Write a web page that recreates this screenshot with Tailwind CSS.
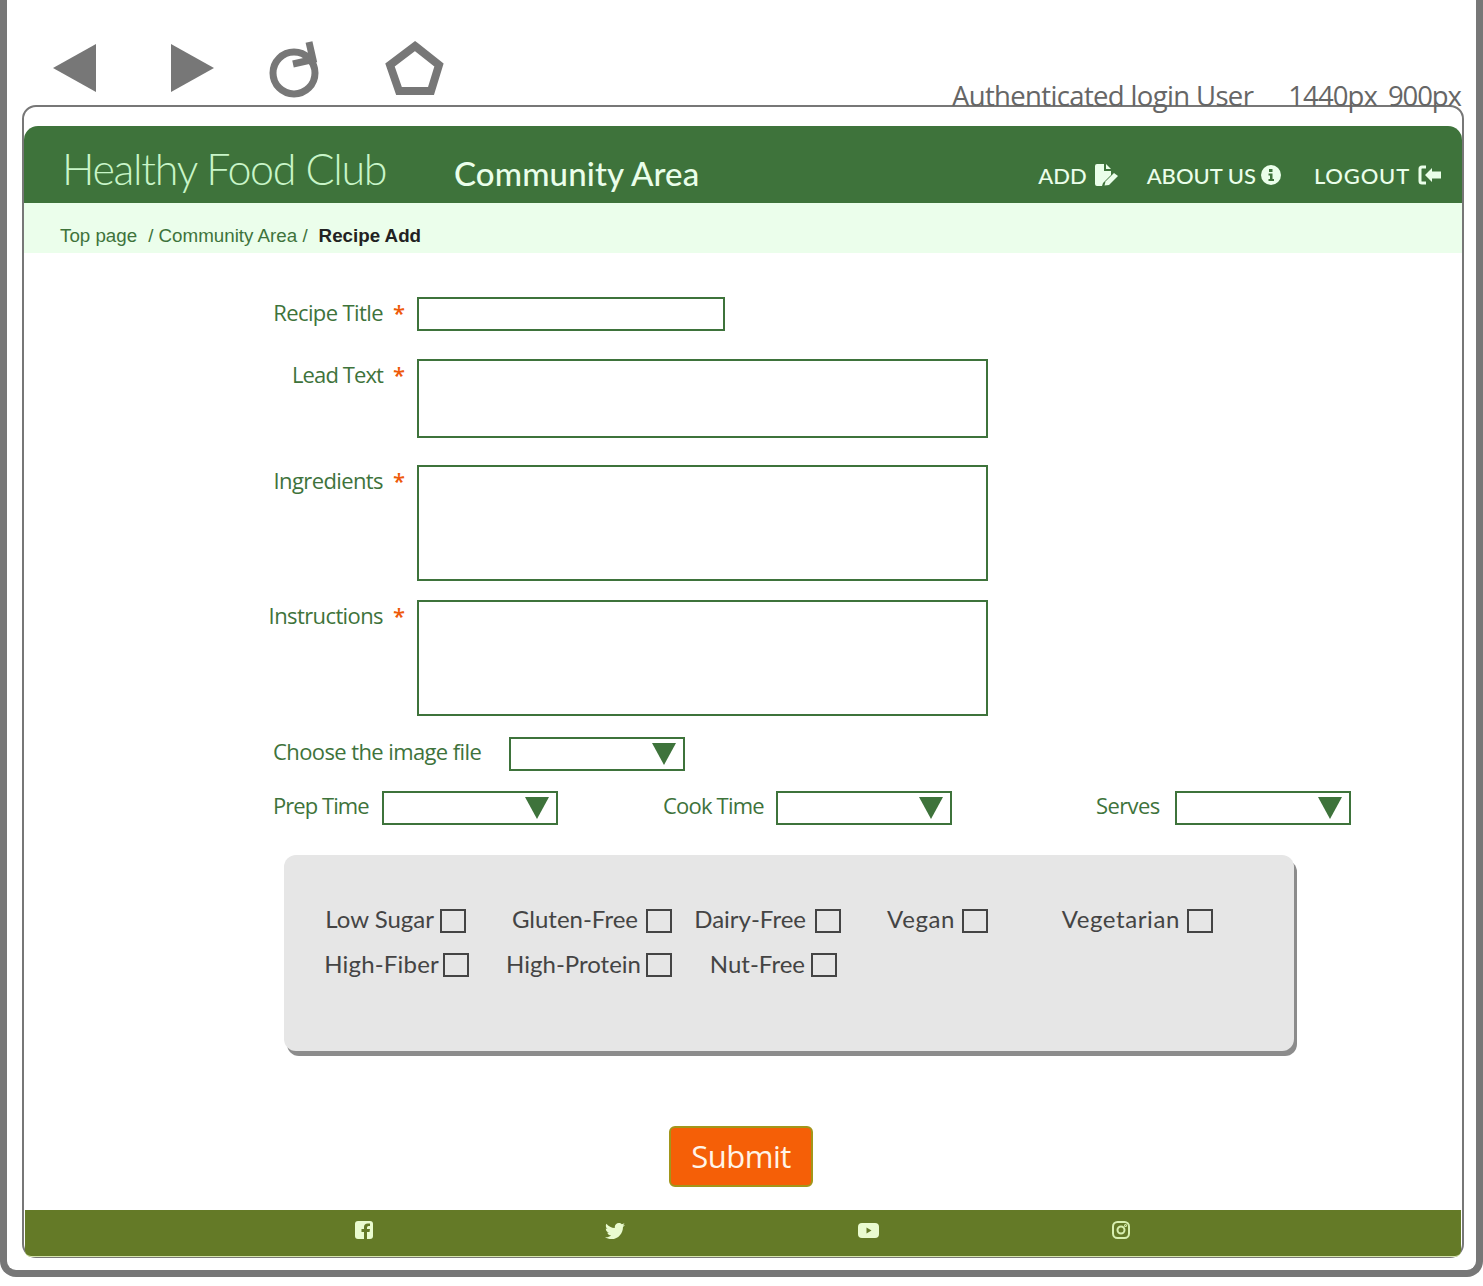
<!DOCTYPE html>
<html lang="en">
<head>
<meta charset="utf-8">
<title>Recipe Add</title>
<script src="https://cdn.jsdelivr.net/npm/@tailwindcss/browser@4"></script>
</head>
<body class="bg-white font-['Open_Sans',sans-serif]">
<div class="w-[1483px] h-[1286px] overflow-hidden">
  <div class="h-[1277px] border-x-[7px] border-b-[7px] border-[#777777] rounded-b-[16px] flex flex-col">
    <div class="relative h-[105px] shrink-0">
      <svg class="block" width="460" height="105" viewBox="7 0 460 105" fill="#777777">
        <polygon points="53,68 96,44 96,92"/>
        <polygon points="171,44 214,68 171,92"/>
        <circle cx="294" cy="73" r="21" fill="none" stroke="#777777" stroke-width="7"/>
        <path d="M293 64 L313 59.500 L309 42" fill="none" stroke="#777777" stroke-width="7"/>
        <polygon points="415,46 439,65 431,91 399,91 390,65" fill="none" stroke="#777777" stroke-width="8"/>
      </svg>
      <div class="absolute z-10 left-[945px] top-[77px] whitespace-nowrap text-[27.500px] leading-[38px] text-[#666666] tracking-[-0.650px]"><span>Authenticated login User</span><span class="ml-[35px] tracking-[-0.900px]">1440px</span><span class="ml-[11px] tracking-[-1.100px]">900px</span></div>
    </div>
    <div class="ml-[15px] w-[1442px] h-[1153px] border-2 border-[#777777] rounded-[14px] pt-[19px] flex flex-col">
      <header class="h-[77px] shrink-0 bg-[#3e733b] rounded-t-[14px] flex items-start text-[#eafeea]">
        <div class="ml-[38px] mt-[23px] w-[392px] font-['Lato',sans-serif] font-light text-[43px] leading-[40px] tracking-[-1.300px] text-[#c8f5c8] whitespace-nowrap">Healthy Food Club</div>
        <div class="mt-[27px] font-['Lato',sans-serif] font-medium text-[33px] leading-[40px] tracking-[0.150px] whitespace-nowrap">Community Area</div>
        <nav class="ml-auto mr-[20px] mt-[29px] h-[40px] flex items-center font-['Lato',sans-serif] font-medium text-[22px] whitespace-nowrap">
          <span>ADD</span>
          <svg class="ml-[8px]" width="24" height="22" viewBox="0 0 24 22" fill="#eafeea">
            <path d="M0 2 Q0 0 2 0 L9 0 L9 7 L16 7 L16 11 L8 19 L7 22 L2 22 Q0 22 0 20 Z"/>
            <path d="M11 0 L16 5 L11 5 Z"/>
            <path d="M19 9 L23 12 L14 21 L9.500 21.500 L10.500 17.500 Z"/>
          </svg>
          <span class="ml-[28px]">ABOUT US</span>
          <svg class="ml-[5px]" width="20" height="20" viewBox="0 0 20 20">
            <circle cx="10" cy="10" r="10" fill="#eafeea"/>
            <rect x="8" y="4" width="3.500" height="3" fill="#3e733b"/>
            <path d="M7.500 8.500 H11.500 V14 H13 V16 H7.500 V14 H9 V10.500 H7.500 Z" fill="#3e733b"/>
          </svg>
          <span class="ml-[33px] tracking-[0.800px]">LOGOUT</span>
          <svg class="ml-[8px]" width="24" height="20" viewBox="0 0 24 20" fill="#eafeea">
            <path d="M8 2 H4 Q2 2 2 4 V16 Q2 18 4 18 H8" fill="none" stroke="#eafeea" stroke-width="3"/>
            <path d="M7 10 L14 3 V6.500 H23 V13.500 H14 V17 Z"/>
          </svg>
        </nav>
      </header>
      <div class="h-[50px] shrink-0 bg-[#ebfeeb] pl-[36px] pt-[16px] flex items-center font-['Liberation_Sans',sans-serif] text-[18.750px] text-[#3e733b] whitespace-nowrap">
        <span>Top page</span>
        <span class="ml-[11px]">/ Community Area /</span>
        <span class="ml-[11px] font-bold text-[#222222]">Recipe Add</span>
      </div>
      <form class="flex-1 flex flex-col text-[22px] leading-[30px] tracking-[-0.600px] text-[#3e733b]">
        <div class="mt-[44px] flex items-start">
          <label class="w-[359px] text-right">Recipe Title</label>
          <span class="w-[34px] pl-[10px] font-semibold text-[#ee5a0a]">*</span>
          <input type="text" class="block w-[308px] h-[34px] border-2 border-[#3e733b] bg-white">
        </div>
        <div class="mt-[28px] flex items-start">
          <label class="w-[359px] text-right tracking-[-0.900px]">Lead Text</label>
          <span class="w-[34px] pl-[10px] font-semibold text-[#ee5a0a]">*</span>
          <textarea class="block w-[571px] h-[79px] border-2 border-[#3e733b] bg-white resize-none"></textarea>
        </div>
        <div class="mt-[27px] flex items-start">
          <label class="w-[359px] text-right">Ingredients</label>
          <span class="w-[34px] pl-[10px] font-semibold text-[#ee5a0a]">*</span>
          <textarea class="block w-[571px] h-[116px] border-2 border-[#3e733b] bg-white resize-none"></textarea>
        </div>
        <div class="mt-[19px] flex items-start">
          <label class="w-[359px] text-right">Instructions</label>
          <span class="w-[34px] pl-[10px] font-semibold text-[#ee5a0a]">*</span>
          <textarea class="block w-[571px] h-[116px] border-2 border-[#3e733b] bg-white resize-none"></textarea>
        </div>
        <div class="mt-[21px] ml-[249px] flex items-start leading-[28px]">
          <label class="w-[236px]">Choose the image file</label>
          <div class="w-[176px] h-[34px] border-2 border-[#3e733b] flex items-center justify-end pr-[7px]">
            <svg width="24" height="22" viewBox="0 0 24 22" fill="#3e733b"><polygon points="0,0 24,0 12,22"/></svg>
          </div>
        </div>
        <div class="mt-[20px] ml-[249px] flex items-start leading-[28px]">
          <label class="w-[109px] tracking-[-0.950px]">Prep Time</label>
          <div class="w-[176px] h-[34px] border-2 border-[#3e733b] flex items-center justify-end pr-[7px]">
            <svg width="24" height="22" viewBox="0 0 24 22" fill="#3e733b"><polygon points="0,0 24,0 12,22"/></svg>
          </div>
          <label class="ml-[105px] w-[113px] tracking-[-0.800px]">Cook Time</label>
          <div class="w-[176px] h-[34px] border-2 border-[#3e733b] flex items-center justify-end pr-[7px]">
            <svg width="24" height="22" viewBox="0 0 24 22" fill="#3e733b"><polygon points="0,0 24,0 12,22"/></svg>
          </div>
          <label class="ml-[144px] w-[79px]">Serves</label>
          <div class="w-[176px] h-[34px] border-2 border-[#3e733b] flex items-center justify-end pr-[7px]">
            <svg width="24" height="22" viewBox="0 0 24 22" fill="#3e733b"><polygon points="0,0 24,0 12,22"/></svg>
          </div>
        </div>
        <div class="mt-[30px] ml-[260px] w-[1010px] h-[196px] shrink-0 bg-[#e6e6e6] rounded-[12px] shadow-[3px_5px_0_#8c8c8c] pt-[54px] pl-[41px] font-['Lato',sans-serif] text-[24px] leading-[20px] tracking-normal text-[#444444] whitespace-nowrap">
          <div class="flex h-[24px]">
            <div class="w-[141px] flex justify-end"><span>Low Sugar</span><span class="ml-[6px] w-[26px] h-[24px] shrink-0 border-2 border-[#444444]"></span></div>
            <div class="w-[206px] flex justify-end"><span>Gluten-Free</span><span class="ml-[8px] w-[26px] h-[24px] shrink-0 border-2 border-[#444444]"></span></div>
            <div class="w-[169px] flex justify-end"><span>Dairy-Free</span><span class="ml-[9px] w-[26px] h-[24px] shrink-0 border-2 border-[#444444]"></span></div>
            <div class="w-[147px] flex justify-end"><span class="tracking-[0.600px]">Vegan</span><span class="ml-[7px] w-[26px] h-[24px] shrink-0 border-2 border-[#444444]"></span></div>
            <div class="w-[225px] flex justify-end"><span class="tracking-[0.600px]">Vegetarian</span><span class="ml-[7px] w-[26px] h-[24px] shrink-0 border-2 border-[#444444]"></span></div>
          </div>
          <div class="flex h-[24px] mt-[20px] leading-[22px]">
            <div class="w-[144px] flex justify-end"><span class="tracking-[0.200px]">High-Fiber</span><span class="ml-[4px] w-[26px] h-[24px] shrink-0 border-2 border-[#444444]"></span></div>
            <div class="w-[203px] flex justify-end"><span>High-Protein</span><span class="ml-[5px] w-[26px] h-[24px] shrink-0 border-2 border-[#444444]"></span></div>
            <div class="w-[165px] flex justify-end"><span>Nut-Free</span><span class="ml-[6px] w-[26px] h-[24px] shrink-0 border-2 border-[#444444]"></span></div>
          </div>
        </div>
        <button type="button" class="mt-[75px] ml-[645px] w-[144px] h-[61px] shrink-0 bg-[#f55f07] border-2 border-[#a2961a] rounded-[6px] text-[31px] leading-[55px] tracking-[-0.500px] text-[#fff4e8] text-center">Submit</button>
        <footer class="mt-[23px] mx-[1px] h-[47px] shrink-0 bg-[#647a27] rounded-b-[6px] border-b border-[#d8e6b0] relative">
          <svg class="absolute left-[330px] top-[11px]" width="18" height="18" viewBox="0 0 18 18"><rect width="18" height="18" rx="3" fill="#eafbd0"/><path d="M12 18 V11 H14.500 L15 8 H12 V6.500 Q12 5 13.500 5 H15 V2.500 H12.800 Q9 2.500 9 6 V8 H6.500 V11 H9 V18 Z" fill="#647a27"/></svg>
          <svg class="absolute left-[580px] top-[11px]" width="20" height="20" viewBox="0 0 512 512"><path fill="#eafbd0" d="M459.37 151.716c.325 4.548.325 9.097.325 13.645 0 138.72-105.583 298.558-298.558 298.558-59.452 0-114.68-17.219-161.137-47.106 8.447.974 16.568 1.299 25.34 1.299 49.055 0 94.213-16.568 130.274-44.832-46.132-.975-84.792-31.188-98.112-72.772 6.498.974 12.995 1.624 19.818 1.624 9.421 0 18.843-1.3 27.614-3.573-48.081-9.747-84.143-51.98-84.143-102.985v-1.299c13.969 7.797 30.214 12.67 47.431 13.319-28.264-18.843-46.781-51.005-46.781-87.391 0-19.492 5.197-37.36 14.294-52.954 51.655 63.675 129.3 105.258 216.365 109.807-1.624-7.797-2.599-15.918-2.599-24.04 0-57.828 46.782-104.934 104.934-104.934 30.213 0 57.502 12.67 76.67 33.137 23.715-4.548 46.456-13.32 66.599-25.34-7.798 24.366-24.366 44.833-46.132 57.827 21.117-2.273 41.584-8.122 60.426-16.243-14.292 20.791-32.161 39.308-52.628 54.253z"/></svg>
          <svg class="absolute left-[833px] top-[13px]" width="21" height="15" viewBox="0 0 21 15"><rect width="21" height="15" rx="4" fill="#eafbd0"/><polygon points="8.500,4.500 13.500,7.500 8.500,10.500" fill="#647a27"/></svg>
          <svg class="absolute left-[1087px] top-[11px]" width="18" height="18" viewBox="0 0 18 18" fill="none" stroke="#d8f0b0" stroke-width="2"><rect x="1" y="1" width="16" height="16" rx="4.500"/><circle cx="9" cy="9" r="3.500"/><circle cx="13.500" cy="4.500" r="0.500"/></svg>
        </footer>
      </form>
    </div>
  </div>
</div>
</body>
</html>
